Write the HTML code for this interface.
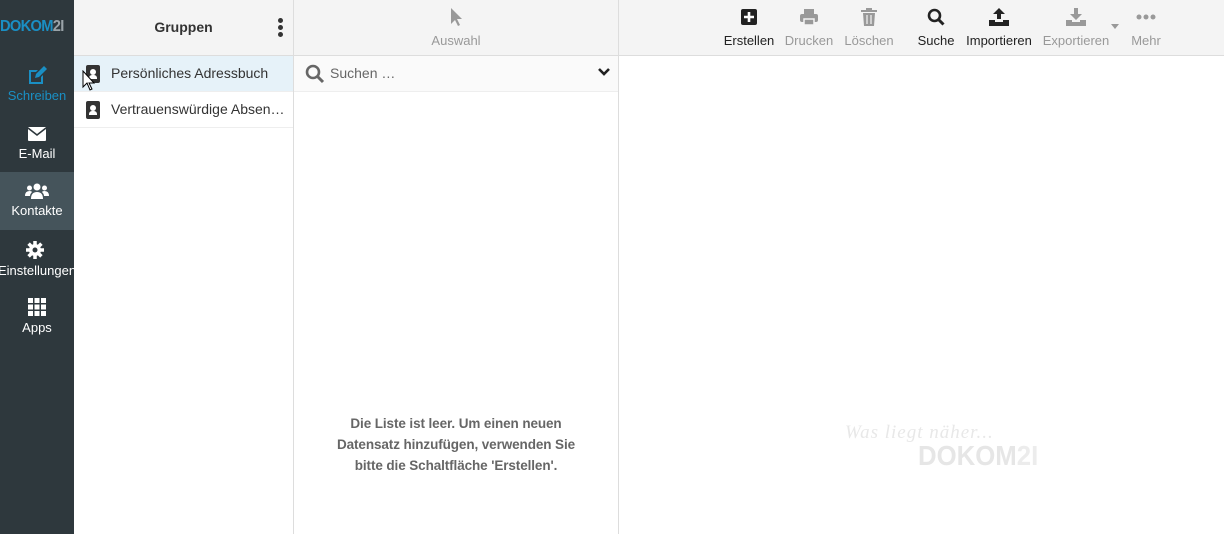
<!DOCTYPE html>
<html><head><meta charset="utf-8"><style>
*{box-sizing:border-box;margin:0;padding:0}
body{width:1224px;height:534px;overflow:hidden;font-family:"Liberation Sans",sans-serif;background:#fff;position:relative;color:#333}
.side{position:absolute;left:0;top:0;width:74px;height:534px;background:#2e383d;overflow:hidden}
.logo{position:absolute;left:0;top:18px;width:74px;font-weight:bold;font-size:16px;color:#1a8fc4;letter-spacing:-0.8px;white-space:nowrap;transform:scaleX(0.92);transform-origin:left}
.logo span{color:#9aa3a8}
.nav{position:absolute;left:0;width:74px;height:58px;text-align:center;color:#fff;font-size:13px;white-space:nowrap}
.nav svg{display:block;margin:0 auto 4px}
.hdr{position:absolute;top:0;height:56px;background:#f4f4f4;border-bottom:1px solid #ddd}
.vl{position:absolute;top:0;width:1px;height:534px;background:#ddd}
.tb{position:absolute;top:8px;text-align:center;font-size:13px;white-space:nowrap}
.tb svg{display:block;margin:0 auto 7px}
.g{color:#999}
.row{position:absolute;left:74px;width:219px;height:36px;border-bottom:1px solid #eee;font-size:14px;padding:9px 0 0 37px;color:#333}
.book{position:absolute;left:12px;top:9px;width:14px;height:18px;background:#333;border-radius:2px}
.book:after{content:"";position:absolute;left:4px;top:4px;width:6px;height:6px;border-radius:50%;background:#fff}
.book:before{content:"";position:absolute;left:3px;top:10px;width:8px;height:4px;border-radius:3px 3px 0 0;background:#fff}
</style></head><body>
<div class="side">
<div class="logo">DOKOM<span>2I</span></div>
<div class="nav" style="top:66px;color:#1a8fc4"><svg width="20" height="18" viewBox="0 0 20 18"><path d="M2 4h9l-2 2H4v10h10v-5l2-2v9H2z" fill="#1a8fc4"/><path d="M8 12l1-4 8-8 3 3-8 8z" fill="#1a8fc4"/></svg>Schreiben</div>
<div class="nav" style="top:126px"><svg width="20" height="16" viewBox="0 0 20 16"><rect x="1" y="1" width="18" height="14" rx="1" fill="#fff"/><path d="M1 2l9 7 9-7" stroke="#2e383d" stroke-width="1.6" fill="none"/></svg>E-Mail</div>
<div class="nav" style="top:172px;height:58px;background:#45545b;padding-top:11px"><svg width="24" height="16" viewBox="0 0 24 16"><circle cx="12" cy="4" r="3.5" fill="#fff"/><circle cx="4.5" cy="5" r="2.5" fill="#fff"/><circle cx="19.5" cy="5" r="2.5" fill="#fff"/><path d="M6 16q0-7 6-7t6 7z M0 13q0-5 4.5-5 2 0 2.5 1-2 2-2 4z M24 13q0-5-4.5-5-2 0-2.5 1 2 2 2 4z" fill="#fff"/></svg>Kontakte</div>
<div class="nav" style="top:241px;left:-2px"><svg width="18" height="18" viewBox="0 0 18 18"><circle cx="9" cy="9" r="6" fill="#fff"/><g stroke="#fff" stroke-width="3.5"><path d="M9 0v18M0 9h18M2.6 2.6l12.8 12.8M15.4 2.6L2.6 15.4"/></g><circle cx="9" cy="9" r="2.5" fill="#2e383d"/></svg>Einstellungen</div>
<div class="nav" style="top:298px"><svg width="18" height="18" viewBox="0 0 18 18" fill="#fff"><rect x="0" y="0" width="5" height="5"/><rect x="6.5" y="0" width="5" height="5"/><rect x="13" y="0" width="5" height="5"/><rect x="0" y="6.5" width="5" height="5"/><rect x="6.5" y="6.5" width="5" height="5"/><rect x="13" y="6.5" width="5" height="5"/><rect x="0" y="13" width="5" height="5"/><rect x="6.5" y="13" width="5" height="5"/><rect x="13" y="13" width="5" height="5"/></svg>Apps</div>
</div>

<div class="hdr" style="left:74px;width:1150px"></div>
<div class="vl" style="left:293px"></div>
<div class="vl" style="left:618px"></div>

<div style="position:absolute;left:74px;top:19px;width:219px;text-align:center;font-weight:bold;font-size:14px;color:#333">Gruppen</div>
<div style="position:absolute;left:278px;top:18px"><div style="width:5px;height:5px;border-radius:50%;background:#333;margin-bottom:2px"></div><div style="width:5px;height:5px;border-radius:50%;background:#333;margin-bottom:2px"></div><div style="width:5px;height:5px;border-radius:50%;background:#333"></div></div>

<div class="tb g" style="left:420px;width:72px"><svg width="12" height="18" viewBox="0 0 12 18"><path d="M1 0v16l4-4 3 6 2-1-3-6h5z" fill="#999"/></svg>Auswahl</div>

<div class="tb" style="left:722px;width:54px;color:#222"><svg width="18" height="18" viewBox="0 0 18 18"><rect x="1" y="1" width="16" height="16" rx="2" fill="#222"/><path d="M9 4v10M4 9h10" stroke="#fff" stroke-width="2.6"/></svg>Erstellen</div>
<div class="tb g" style="left:784px;width:50px"><svg width="18" height="18" viewBox="0 0 18 18" fill="#999"><rect x="4" y="1" width="10" height="5"/><rect x="0" y="6" width="18" height="8" rx="2"/><rect x="4" y="11" width="10" height="6" fill="#999" stroke="#f4f4f4" stroke-width="1.5"/></svg>Drucken</div>
<div class="tb g" style="left:842px;width:54px"><svg width="16" height="18" viewBox="0 0 16 18" fill="#999"><rect x="0" y="2" width="16" height="2"/><rect x="5" y="0" width="6" height="2"/><path d="M2 5h12l-1 13H3z"/><path d="M6 7v9M10 7v9" stroke="#f4f4f4" stroke-width="1.2"/></svg>Löschen</div>
<div class="tb" style="left:916px;width:40px;color:#222"><svg width="18" height="18" viewBox="0 0 18 18"><circle cx="7.5" cy="7.5" r="5.5" stroke="#222" stroke-width="2.6" fill="none"/><path d="M11.5 11.5l5 5" stroke="#222" stroke-width="3"/></svg>Suche</div>
<div class="tb" style="left:963px;width:72px;color:#222"><svg width="20" height="18" viewBox="0 0 20 18" fill="#222"><path d="M10 0l6 6h-4v5H8V6H4z"/><path d="M0 12h6v2h8v-2h6v6H0z"/></svg>Importieren</div>
<div class="tb g" style="left:1041px;width:70px"><svg width="20" height="18" viewBox="0 0 20 18" fill="#999"><path d="M8 0h4v6h4l-6 6-6-6h4z"/><path d="M0 12h6v2h8v-2h6v6H0z"/></svg>Exportieren</div>
<div style="position:absolute;left:1111px;top:24px;border:4px solid transparent;border-top:5px solid #999"></div>
<div class="tb g" style="left:1128px;width:36px"><svg width="20" height="18" viewBox="0 0 20 18" fill="#999"><circle cx="3" cy="9" r="2.5"/><circle cx="10" cy="9" r="2.5"/><circle cx="17" cy="9" r="2.5"/></svg>Mehr</div>

<div class="row" style="top:56px;background:#e6f2f9">Persönliches Adressbuch<div class="book"></div></div>
<div class="row" style="top:92px">Vertrauenswürdige Absen…<div class="book"></div></div>
<svg style="position:absolute;left:82px;top:70px" width="14" height="22" viewBox="0 0 14 22"><path d="M1 1v16l4-4 3 7 2-1-3-6h5z" fill="#fff" stroke="#000"/></svg>

<div style="position:absolute;left:294px;top:56px;width:324px;height:36px;background:#fafafa;border-bottom:1px solid #eee"></div>
<svg style="position:absolute;left:305px;top:64px" width="20" height="20" viewBox="0 0 20 20"><circle cx="8" cy="8" r="6" stroke="#666" stroke-width="2.6" fill="none"/><path d="M12.5 12.5l5.5 5.5" stroke="#666" stroke-width="3"/></svg>
<div style="position:absolute;left:330px;top:65px;font-size:14px;color:#666">Suchen …</div>
<svg style="position:absolute;left:598px;top:68px" width="12" height="9" viewBox="0 0 12 9"><path d="M1 1l5 5 5-5" stroke="#222" stroke-width="2.6" fill="none"/></svg>

<div style="position:absolute;left:294px;top:413px;width:324px;text-align:center;font-weight:bold;font-size:13.5px;line-height:21px;color:#666;letter-spacing:-0.1px">Die Liste ist leer. Um einen neuen<br>Datensatz hinzufügen, verwenden Sie<br>bitte die Schaltfläche 'Erstellen'.</div>

<div style="position:absolute;left:845px;top:422px;font-family:'Liberation Serif',serif;font-style:italic;font-size:19px;color:#e8e8e8;letter-spacing:1px">Was liegt näher...</div>
<div style="position:absolute;left:918px;top:440px;font-size:28px;font-weight:bold;color:#e6e6e6;transform:scaleX(0.92);transform-origin:left">DOKOM<span style="color:#ececec">2I</span></div>
</body></html>
